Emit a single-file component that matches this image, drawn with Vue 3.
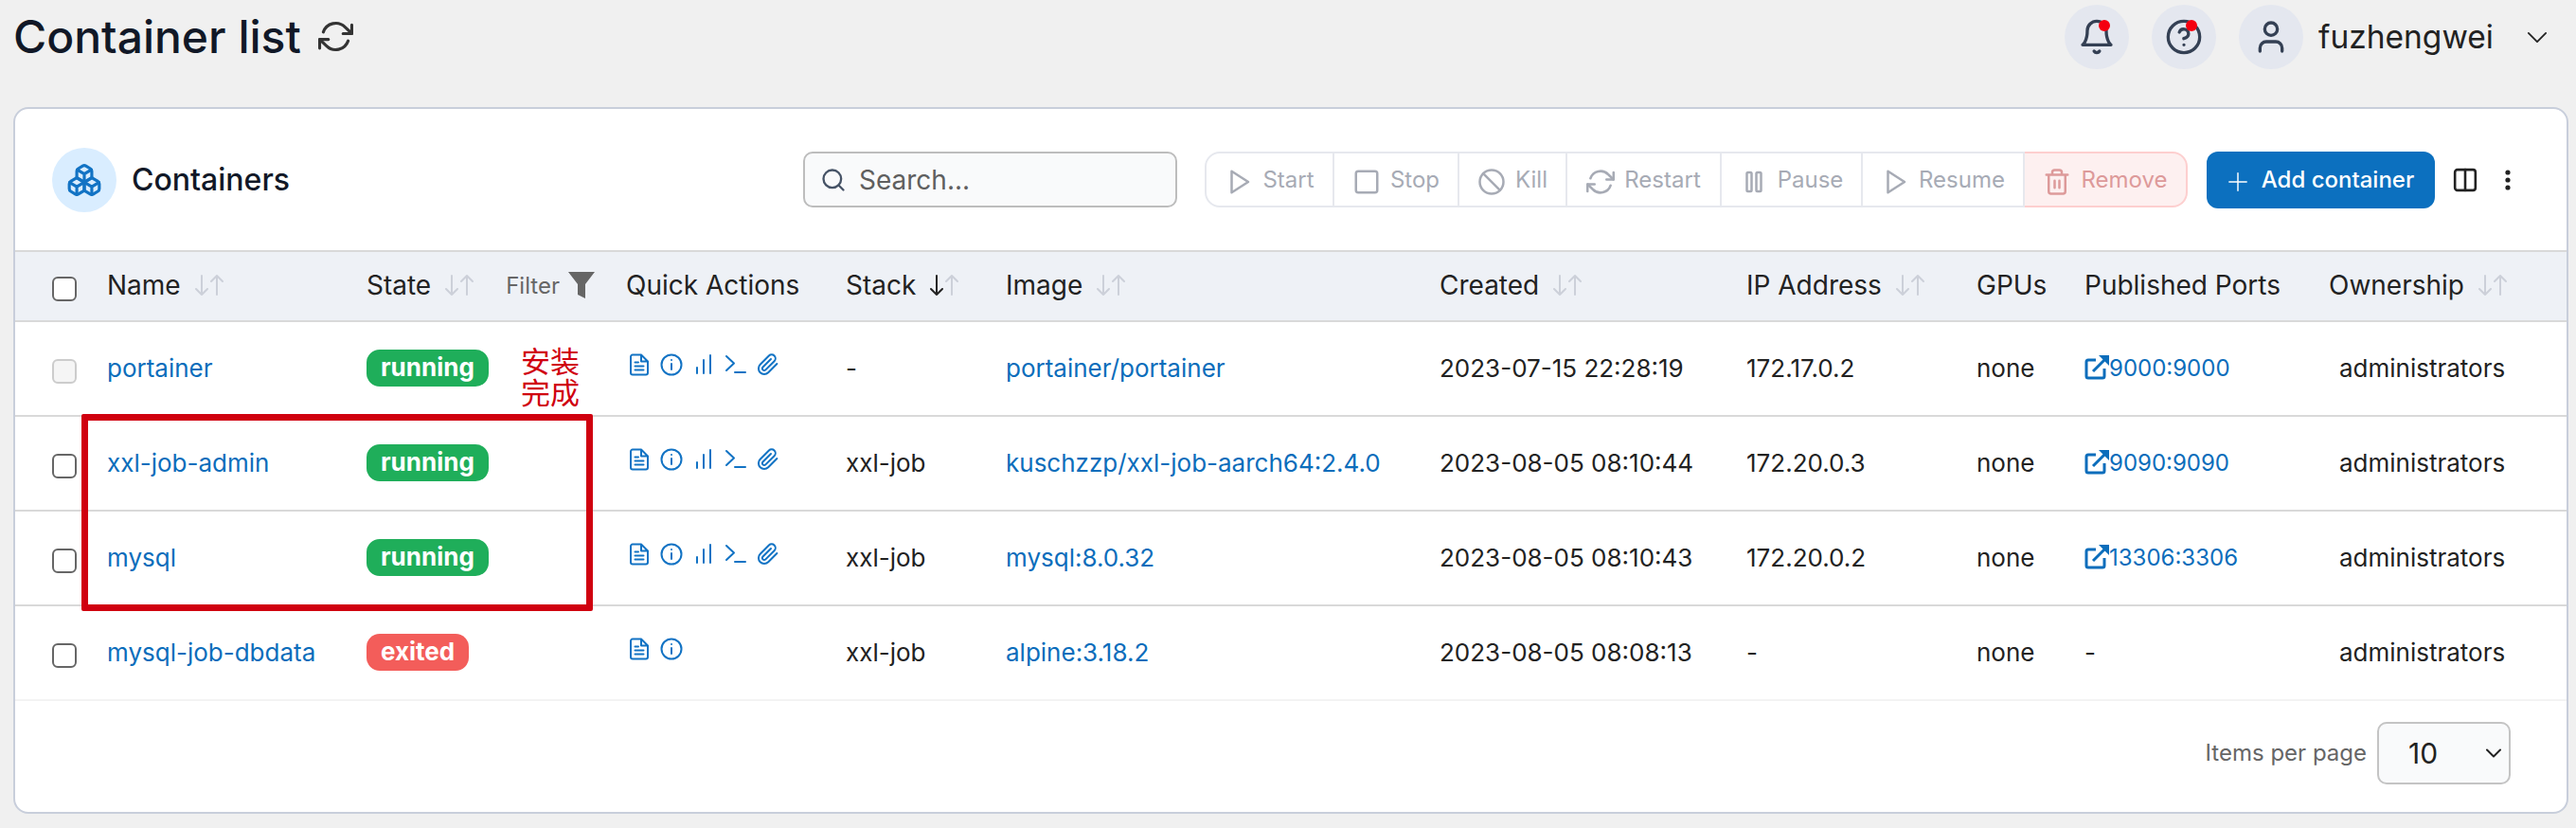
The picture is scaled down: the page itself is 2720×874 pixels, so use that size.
<script setup>
const actions = [
  { name: 'Start', w: 137, icon: 'play' },
  { name: 'Stop', w: 132, icon: 'stop' },
  { name: 'Kill', w: 114, icon: 'ban' },
  { name: 'Restart', w: 163, icon: 'refresh' },
  { name: 'Pause', w: 149, icon: 'pause' },
  { name: 'Resume', w: 171, icon: 'play' },
]

const columns = [
  { label: 'Name', sort: true },
  { label: 'State', sort: true, filter: true },
  { label: 'Quick Actions' },
  { label: 'Stack', sort: true, active: true },
  { label: 'Image', sort: true },
  { label: 'Created', sort: true },
  { label: 'IP Address', sort: true },
  { label: 'GPUs' },
  { label: 'Published Ports' },
  { label: 'Ownership', sort: true },
]

const rows = [
  { name: 'portainer', state: 'running', stack: '-', image: 'portainer/portainer', created: '2023-07-15 22:28:19', ip: '172.17.0.2', port: '9000:9000', locked: true },
  { name: 'xxl-job-admin', state: 'running', stack: 'xxl-job', image: 'kuschzzp/xxl-job-aarch64:2.4.0', created: '2023-08-05 08:10:44', ip: '172.20.0.3', port: '9090:9090' },
  { name: 'mysql', state: 'running', stack: 'xxl-job', image: 'mysql:8.0.32', created: '2023-08-05 08:10:43', ip: '172.20.0.2', port: '13306:3306' },
  { name: 'mysql-job-dbdata', state: 'exited', stack: 'xxl-job', image: 'alpine:3.18.2', created: '2023-08-05 08:08:13', ip: '-', port: '' },
]
</script>

<template>
  <div class="page">
    <header class="topbar">
      <div class="title-wrap">
        <h1>Container list</h1>
        <svg class="reload" viewBox="0 0 24 24"><path d="M23 4v6h-6M1 20v-6h6" /><path d="M3.5 9a9 9 0 0 1 14.9-3.4L23 10M1 14l4.6 4.4A9 9 0 0 0 20.5 15" /></svg>
      </div>
      <div class="user-area">
        <span class="round">
          <svg viewBox="0 0 24 24"><path d="M6 8a6 6 0 0 1 12 0c0 7 3 9 3 9H3s3-2 3-9" /><path d="M10.3 21a2 2 0 0 0 3.4 0" /></svg>
          <i class="dot"></i>
        </span>
        <span class="round">
          <svg viewBox="0 0 24 24"><circle cx="12" cy="12" r="10" /><path d="M9.1 9a3 3 0 0 1 5.8 1c0 2-3 3-3 3M12 17h.01" /></svg>
          <i class="dot"></i>
        </span>
        <span class="round">
          <svg viewBox="0 0 24 24"><path d="M19 21v-2a4 4 0 0 0-4-4H9a4 4 0 0 0-4 4v2" /><circle cx="12" cy="7" r="4" /></svg>
        </span>
        <span class="username">fuzhengwei</span>
        <svg class="chev" viewBox="0 0 24 14"><path d="M2 2l10 10L22 2" /></svg>
      </div>
    </header>

    <section class="card">
      <div class="card-head">
        <div class="card-title">
          <span class="title-icon">
            <svg viewBox="0 0 24 24">
              <path d="M2.97 12.92A2 2 0 0 0 2 14.63v3.24a2 2 0 0 0 .97 1.71l3 1.8a2 2 0 0 0 2.06 0L12 19v-5.5l-5-3-4.03 2.42Z" />
              <path d="m7 16.5-4.74-2.85M7 16.5l5-3M7 16.5v5.17" />
              <path d="M12 13.5V19l3.97 2.38a2 2 0 0 0 2.06 0l3-1.8a2 2 0 0 0 .97-1.71v-3.24a2 2 0 0 0-.97-1.71L17 10.5l-5 3Z" />
              <path d="m17 16.5-5-3M17 16.5l4.74-2.85M17 16.5v5.17" />
              <path d="M7.97 4.42A2 2 0 0 0 7 6.13v4.37l5 3 5-3V6.13a2 2 0 0 0-.97-1.71l-3-1.8a2 2 0 0 0-2.06 0l-3 1.8Z" />
              <path d="M12 8 7.26 5.15M12 8l4.74-2.85M12 13.5V8" />
            </svg>
          </span>
          <h2>Containers</h2>
        </div>
        <div class="search">
          <svg viewBox="0 0 24 24"><circle cx="11" cy="11" r="8" /><path d="m21 21-4.3-4.3" /></svg>
          <span>Search...</span>
        </div>
        <div class="btn-group">
          <button v-for="a in actions" :key="a.name" class="act" :style="{ width: a.w + 'px' }">
            <svg viewBox="0 0 24 24">
              <path v-if="a.icon === 'play'" d="M6 3l14 9-14 9z" />
              <rect v-else-if="a.icon === 'stop'" x="3" y="3" width="18" height="18" rx="2" />
              <template v-else-if="a.icon === 'ban'"><circle cx="12" cy="12" r="10" /><path d="M4.9 4.9l14.2 14.2" /></template>
              <template v-else-if="a.icon === 'refresh'"><path d="M23 4v6h-6M1 20v-6h6" /><path d="M3.5 9a9 9 0 0 1 14.9-3.4L23 10M1 14l4.6 4.4A9 9 0 0 0 20.5 15" /></template>
              <template v-else><rect x="6" y="4" width="4" height="16" rx="1" /><rect x="14" y="4" width="4" height="16" rx="1" /></template>
            </svg>
            {{ a.name }}
          </button>
          <button class="act remove">
            <svg viewBox="0 0 24 24"><path d="M3 6h18M19 6v14a2 2 0 0 1-2 2H7a2 2 0 0 1-2-2V6M8 6V4a2 2 0 0 1 2-2h4a2 2 0 0 1 2 2v2M10 11v6M14 11v6" /></svg>
            Remove
          </button>
        </div>
        <button class="add">
          <svg viewBox="0 0 24 24"><path d="M12 2v20M2 12h20" /></svg>
          Add container
        </button>
        <svg class="cols" viewBox="0 0 24 24"><rect x="2" y="2" width="20" height="20" rx="2.5" /><path d="M12 2v20" /></svg>
        <svg class="more" viewBox="0 0 6 22"><circle cx="3" cy="3" r="2.6" /><circle cx="3" cy="11" r="2.6" /><circle cx="3" cy="19" r="2.6" /></svg>
      </div>

      <table>
        <colgroup>
          <col style="width: 97px" /><col style="width: 274px" /><col style="width: 274px" /><col style="width: 232px" />
          <col style="width: 169px" /><col style="width: 458px" /><col style="width: 324px" /><col style="width: 243px" />
          <col style="width: 114px" /><col style="width: 258px" /><col />
        </colgroup>
        <thead>
          <tr>
            <th class="check-cell"><input type="checkbox" class="check" /></th>
            <th v-for="c in columns" :key="c.label">
              <div class="th-in">
                {{ c.label }}
                <svg v-if="c.sort" class="sort" viewBox="0 0 30 24">
                  <path :class="{ on: c.active }" d="M7 2v20M1 16l6 6 6-6" />
                  <path d="M23 22V2M17 8l6-6 6 6" />
                </svg>
                <span v-if="c.filter" class="filter">
                  Filter
                  <svg viewBox="0 0 28 28"><path d="M0 0h28L18 13v15l-8-4V13z" /></svg>
                </span>
              </div>
            </th>
          </tr>
        </thead>
        <tbody>
          <tr v-for="r in rows" :key="r.name">
            <td class="check-cell"><input type="checkbox" class="check" :class="{ locked: r.locked }" /></td>
            <td><a>{{ r.name }}</a></td>
            <td><span class="badge" :class="r.state">{{ r.state }}</span></td>
            <td>
              <div class="quick">
                <svg viewBox="0 0 24 24"><path d="M14 1.5H5a2 2 0 0 0-2 2v17a2 2 0 0 0 2 2h14a2 2 0 0 0 2-2V8.5zM14 1.5v7h7M7.5 9.5H11M7.5 13.5h9M7.5 17.5h9" /></svg>
                <svg viewBox="0 0 24 24"><circle cx="12" cy="12" r="10.5" /><path d="M12 11v6M12 7h.01" /></svg>
                <template v-if="r.state === 'running'">
                  <svg viewBox="0 0 24 24"><path d="M5 21v-6M12 21V7M19 21V2" /></svg>
                  <svg viewBox="0 0 24 24"><path d="M2 3l8 7.5L2 18M11 20h11" /></svg>
                  <svg viewBox="0 0 24 24"><path d="M21.4 11l-9.2 9.2a6 6 0 0 1-8.5-8.5l9.2-9.2a4 4 0 0 1 5.7 5.7l-9.2 9.2a2 2 0 0 1-2.9-2.9l8.5-8.5" /></svg>
                </template>
              </div>
            </td>
            <td>{{ r.stack }}</td>
            <td><a>{{ r.image }}</a></td>
            <td>{{ r.created }}</td>
            <td>{{ r.ip }}</td>
            <td>none</td>
            <td>
              <a v-if="r.port" class="port">
                <svg viewBox="0 0 26 26"><path d="M12 5H4a2 2 0 0 0-2 2v15a2 2 0 0 0 2 2h15a2 2 0 0 0 2-2v-8" /><path d="M9 17L23 3" /><path class="head" d="M15 0h11v11z" /></svg>{{ r.port }}
              </a>
              <template v-else>-</template>
            </td>
            <td class="owner">administrators</td>
          </tr>
        </tbody>
      </table>

      <div class="card-foot">
        <span class="per-page">Items per page</span>
        <div class="select">
          <span>10</span>
          <svg viewBox="0 0 16 10"><path d="M1 1.5l7 7 7-7" /></svg>
        </div>
      </div>
    </section>

    <div class="mark-box"></div>
    <div class="mark-text">安装<br />完成</div>
  </div>
</template>

<style scoped>
.page {
  position: relative;
  width: 2720px;
  height: 874px;
  background: #f0f0f0;
  font-family: Inter, "Noto Sans CJK SC", sans-serif;
  font-size: 26px;
  color: #222;
  overflow: hidden;
}

svg {
  fill: none;
  stroke: currentColor;
  stroke-width: 2;
  stroke-linecap: round;
  stroke-linejoin: round;
  flex: none;
}

.topbar {
  height: 113px;
  padding-left: 14px;
  padding-right: 30px;
  display: flex;
  justify-content: space-between;
  box-sizing: border-box;
}

.title-wrap {
  display: flex;
  align-items: center;
  height: 77px;
  gap: 18px;
}

h1 {
  margin: 0;
  font-size: 48px;
  font-weight: 500;
  color: #111827;
}

.reload {
  width: 37px;
  height: 37px;
  color: #333;
}

.user-area {
  display: flex;
  align-items: center;
  height: 78px;
}

.round {
  position: relative;
  width: 68px;
  height: 68px;
  border-radius: 50%;
  background: #e4e7ef;
  margin-right: 24px;
  display: flex;
  align-items: center;
  justify-content: center;
  color: #344054;
}

.round svg {
  width: 40px;
  height: 40px;
}

.dot {
  position: absolute;
  left: 36px;
  top: 16px;
  width: 12px;
  height: 12px;
  border-radius: 50%;
  background: #f5000f;
}

.username {
  margin-left: -8px;
  font-size: 33.5px;
  width: 220px;
  color: #222;
}

.chev {
  width: 22px;
  height: 13px;
}

.card {
  margin-left: 14px;
  width: 2698px;
  height: 746px;
  box-sizing: border-box;
  background: #fff;
  border: 2px solid #c8cedb;
  border-radius: 16px;
  overflow: hidden;
}

.card-head {
  height: 149px;
  display: flex;
  align-items: center;
  box-sizing: border-box;
  padding-left: 39px;
}

.card-title {
  display: flex;
  align-items: center;
  width: 793px;
  gap: 16px;
}

.title-icon {
  width: 68px;
  height: 68px;
  border-radius: 50%;
  background: #d9edff;
  display: flex;
  align-items: center;
  justify-content: center;
  color: #1273c4;
}

.title-icon svg {
  width: 38px;
  height: 38px;
}

h2 {
  margin: 0;
  font-size: 32px;
  font-weight: 500;
  color: #111827;
}

.search {
  width: 395px;
  height: 59px;
  box-sizing: border-box;
  border: 2px solid #bdbdbd;
  border-radius: 10px;
  background: #f9fafb;
  display: flex;
  align-items: center;
  gap: 13px;
  padding-left: 16px;
  font-size: 28px;
  color: #5f5f5f;
}

.search svg {
  width: 28px;
  height: 28px;
  color: #475467;
}

.btn-group {
  display: flex;
  margin-left: 29px;
  height: 59px;
}

.act {
  height: 59px;
  box-sizing: border-box;
  padding: 0;
  background: #fff;
  border: 2px solid #e6e8ee;
  border-left: 0;
  font: inherit;
  font-size: 24px;
  color: #a7abb5;
  display: flex;
  align-items: center;
  justify-content: center;
  gap: 10px;
}

.act:first-child {
  border-left: 2px solid #e6e8ee;
  border-radius: 16px 0 0 16px;
}

.act svg {
  width: 30px;
  height: 30px;
  margin-top: 4px;
}

.remove {
  width: 172px;
  background: #fdf0f0;
  border-color: #fdcfcf;
  border-radius: 0 16px 16px 0;
  color: #dd9a9a;
}

.add {
  margin-left: 20px;
  width: 241px;
  height: 60px;
  border: 0;
  border-radius: 12px;
  background: #0c70bf;
  color: #fff;
  font: inherit;
  font-size: 24px;
  font-weight: 500;
  display: flex;
  align-items: center;
  justify-content: center;
  gap: 14px;
}

.add svg {
  width: 22px;
  height: 22px;
  margin-top: 4px;
  stroke-width: 1.6;
}

.cols {
  width: 26px;
  height: 26px;
  margin-left: 19px;
  color: #222;
  stroke-width: 2.4;
}

.more {
  width: 6px;
  height: 22px;
  margin-left: 29px;
  fill: #222;
  stroke: none;
}

table {
  width: 100%;
  table-layout: fixed;
  border-collapse: collapse;
  border-top: 2px solid #d9d9d9;
}

th {
  height: 70px;
  padding: 0 0 2px;
  background: #eef1f6;
  font-size: 28px;
  font-weight: 400;
  text-align: left;
  border-bottom: 2px solid #d9d9d9;
}

td {
  height: 96px;
  padding: 0 0 2px;
  border-bottom: 2px solid #d9d9d9;
}

tbody tr:last-child td {
  border-bottom-color: #f3f3f3;
}

.th-in {
  display: flex;
  align-items: center;
  white-space: nowrap;
}

th.check-cell,
td.check-cell {
  padding-left: 39px;
}

.check {
  appearance: none;
  display: block;
  margin: 8px 0 0;
  width: 26px;
  height: 26px;
  border: 2.5px solid #666;
  border-radius: 6px;
  background: #fff;
}

.check.locked {
  border-color: #ccc;
  background: #f5f5f5;
}

.sort {
  width: 30px;
  height: 24px;
  margin-left: 15px;
  color: #ccd0d9;
}

.sort .on {
  color: #222;
}

.filter {
  display: flex;
  align-items: center;
  gap: 9px;
  margin-left: 34px;
  font-size: 24px;
  color: #666;
}

.filter svg {
  width: 28px;
  height: 28px;
  fill: #666;
  stroke: none;
}

a {
  color: #0b6dbb;
}

.badge {
  display: inline-block;
  height: 39px;
  line-height: 38px;
  padding: 0 15px;
  border-radius: 14px;
  color: #fff;
  font-weight: 700;
  vertical-align: middle;
}

.running {
  background: #1fae5a;
}

.exited {
  background: #f35d5a;
}

.quick {
  display: flex;
  gap: 10px;
  margin: 0 0 7px 2px;
  color: #1273c4;
}

.quick svg {
  width: 24px;
  height: 24px;
}

.port {
  display: flex;
  align-items: center;
  font-size: 24px;
}

.port svg {
  width: 26px;
  height: 26px;
  stroke-width: 3;
  stroke-linecap: butt;
}

.port .head {
  fill: currentColor;
  stroke: none;
}

.owner {
  padding-left: 11px;
}

.card-foot {
  height: 118px;
  display: flex;
  align-items: center;
  justify-content: flex-end;
  padding-right: 59px;
  padding-bottom: 8px;
  box-sizing: border-box;
}

.per-page {
  font-size: 24px;
  color: #666;
  margin: 0 11px 2px 0;
}

.select {
  width: 141px;
  height: 66px;
  box-sizing: border-box;
  border: 2px solid #c4c4c4;
  border-radius: 10px;
  background: #f9fafb;
  display: flex;
  align-items: center;
  justify-content: space-between;
  padding: 0 8px 0 31px;
  font-size: 30px;
}

.select svg {
  width: 16px;
  height: 10px;
}

.mark-box {
  position: absolute;
  left: 86px;
  top: 437px;
  width: 540px;
  height: 208px;
  box-sizing: border-box;
  border: 7px solid #d0000f;
  border-radius: 2px;
}

.mark-text {
  position: absolute;
  left: 550px;
  top: 365px;
  font-size: 31px;
  line-height: 33px;
  color: #d0000f;
}
</style>

<style>
html, body {
  margin: 0;
  background: #f0f0f0;
}
</style>
